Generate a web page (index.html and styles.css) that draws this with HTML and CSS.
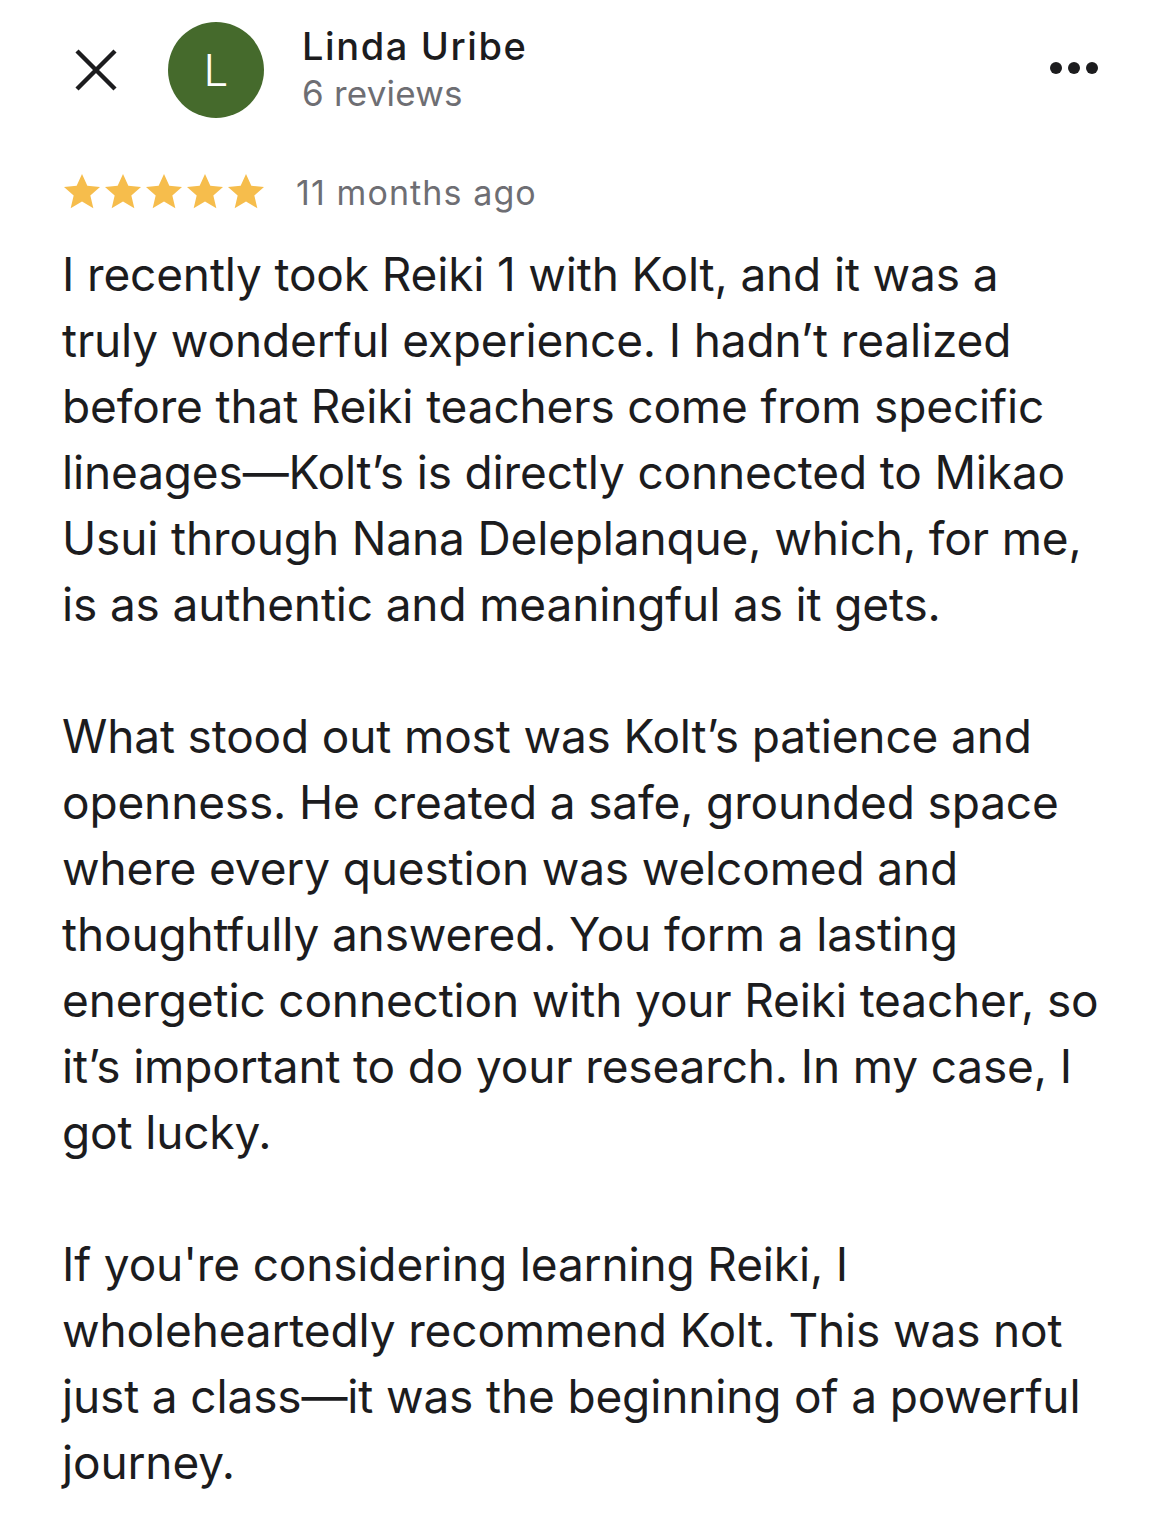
FILE: index.html
```html
<!DOCTYPE html>
<html>
<head>
<meta charset="utf-8">
<link rel="stylesheet" href="styles.css">
</head>
<body>
<div class="page">
  <header class="head">
    <svg class="close" viewBox="0 0 42 42" width="42" height="42"><path d="M2 2 L40 40 M40 2 L2 40" stroke="#1c1c1e" stroke-width="4.4" stroke-linecap="butt"/></svg>
    <div class="avatar">L</div>
    <div class="who">
      <div class="name">Linda Uribe</div>
      <div class="count">6 reviews</div>
    </div>
    <div class="more"><span></span><span></span><span></span></div>
  </header>
  <div class="meta">
    <div class="stars">
      <svg viewBox="0 0 24 24"><path d="M12 1.2l3.2 7.1 7.6.7-5.8 5.1 1.8 7.6L12 17.7l-6.8 4 1.8-7.6-5.8-5.1 7.6-.7z"/></svg>
      <svg viewBox="0 0 24 24"><path d="M12 1.2l3.2 7.1 7.6.7-5.8 5.1 1.8 7.6L12 17.7l-6.8 4 1.8-7.6-5.8-5.1 7.6-.7z"/></svg>
      <svg viewBox="0 0 24 24"><path d="M12 1.2l3.2 7.1 7.6.7-5.8 5.1 1.8 7.6L12 17.7l-6.8 4 1.8-7.6-5.8-5.1 7.6-.7z"/></svg>
      <svg viewBox="0 0 24 24"><path d="M12 1.2l3.2 7.1 7.6.7-5.8 5.1 1.8 7.6L12 17.7l-6.8 4 1.8-7.6-5.8-5.1 7.6-.7z"/></svg>
      <svg viewBox="0 0 24 24"><path d="M12 1.2l3.2 7.1 7.6.7-5.8 5.1 1.8 7.6L12 17.7l-6.8 4 1.8-7.6-5.8-5.1 7.6-.7z"/></svg>
    </div>
    <span class="ago">11 months ago</span>
  </div>
  <div class="body">
    <p>I recently took Reiki 1 with Kolt, and it was a<br>truly wonderful experience. I hadn’t realized<br>before that Reiki teachers come from specific<br>lineages—Kolt’s is directly connected to Mikao<br>Usui through Nana Deleplanque, which, for me,<br>is as authentic and meaningful as it gets.</p>
    <p>What stood out most was Kolt’s patience and<br>openness. He created a safe, grounded space<br>where every question was welcomed and<br>thoughtfully answered. You form a lasting<br>energetic connection with your Reiki teacher, so<br>it’s important to do your research. In my case, I<br>got lucky.</p>
    <p>If you're considering learning Reiki, I<br>wholeheartedly recommend Kolt. This was not<br>just a class—it was the beginning of a powerful<br>journey.</p>
  </div>
</div>
</body>
</html>
```
FILE: styles.css
```css
html, body {
  margin: 0;
  padding: 0;
  background: #ffffff;
}
body {
  font-family: Inter, "Noto Sans", Roboto, sans-serif;
  color: #1c1c1e;
}
.page {
  width: 1170px;
  height: 1540px;
  overflow: hidden;
  box-sizing: border-box;
  padding: 22px 72px 0 62px;
}
.head {
  display: flex;
  align-items: center;
  height: 96px;
}
.close {
  margin-left: 13px;
  width: 42px;
  height: 42px;
  flex: none;
}
.avatar {
  margin-left: 51px;
  width: 96px;
  height: 96px;
  border-radius: 50%;
  background: #456a2c;
  color: #ffffff;
  display: flex;
  align-items: center;
  justify-content: center;
  font-size: 44px;
  font-weight: 300;
  flex: none;
}
.who {
  margin-left: 38px;
  display: flex;
  flex-direction: column;
  flex: 1;
  margin-top: -2px;
}
.name {
  font-size: 38px;
  font-weight: 500;
  line-height: 48px;
  letter-spacing: 1.6px;
  color: #1c1c1e;
}
.count {
  font-size: 35px;
  line-height: 46px;
  letter-spacing: 0.2px;
  color: #6e6e73;
}
.more {
  display: flex;
  gap: 6px;
  margin-top: -4px;
}
.more span {
  width: 12px;
  height: 12px;
  border-radius: 50%;
  background: #1c1c1e;
}
.meta {
  display: flex;
  align-items: center;
  margin-top: 52px;
  height: 44px;
}
.stars {
  display: flex;
  gap: 1px;
}
.stars svg {
  width: 40px;
  height: 40px;
  fill: #f6bd4c;
}
.ago {
  margin-left: 30px;
  font-size: 34px;
  letter-spacing: 1.1px;
  color: #6e6e73;
}
.body {
  margin-top: 27px;
}
.body p {
  margin: 0 0 66px 0;
  font-size: 46px;
  line-height: 66px;
  white-space: nowrap;
  letter-spacing: -0.15px;
  color: #1c1c1e;
}
```
